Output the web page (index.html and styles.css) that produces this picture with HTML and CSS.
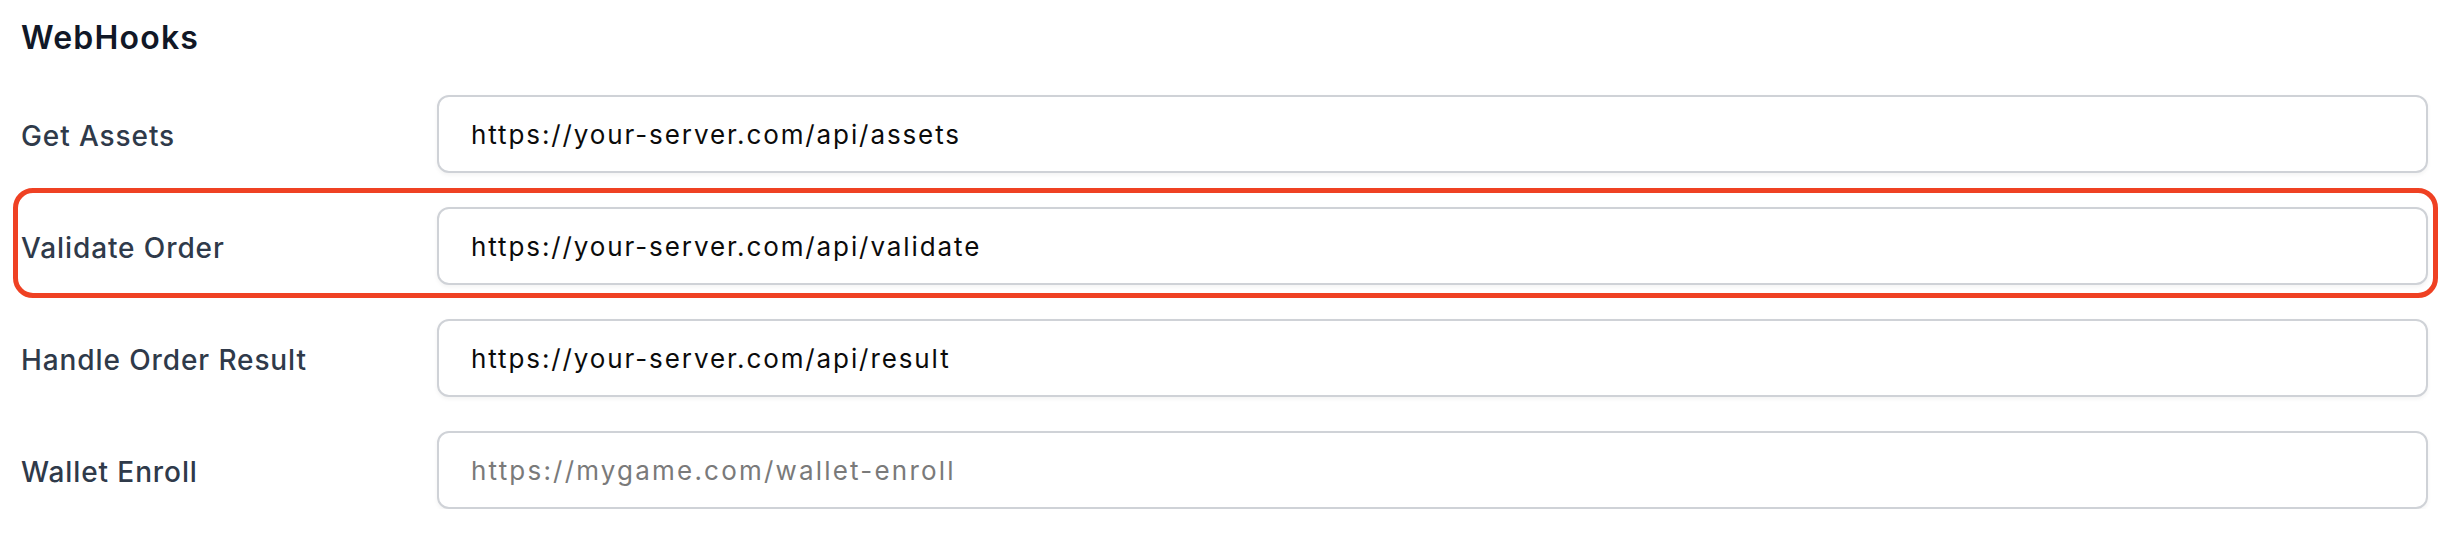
FILE: index.html
```html
<!DOCTYPE html>
<html lang="en">
<head>
<meta charset="utf-8">
<title>WebHooks</title>
<link rel="stylesheet" href="styles.css">
</head>
<body>
<section class="webhooks">
  <h2 class="title">WebHooks</h2>
  <div class="rows">
    <div class="row">
      <label class="label" for="get-assets">Get Assets</label>
      <input class="field" id="get-assets" type="text" value="https://your-server.com/api/assets">
    </div>
    <div class="row row-highlight">
      <label class="label" for="validate-order">Validate Order</label>
      <input class="field" id="validate-order" type="text" value="https://your-server.com/api/validate">
    </div>
    <div class="row">
      <label class="label" for="order-result">Handle Order Result</label>
      <input class="field" id="order-result" type="text" value="https://your-server.com/api/result">
    </div>
    <div class="row">
      <label class="label" for="wallet-enroll">Wallet Enroll</label>
      <input class="field" id="wallet-enroll" type="text" placeholder="https://mygame.com/wallet-enroll">
    </div>
  </div>
</section>
</body>
</html>
```

FILE: styles.css
```css
* { box-sizing: border-box; }

html, body {
  margin: 0;
  padding: 0;
  background: #ffffff;
}

body {
  font-family: Inter, "Noto Sans", "Liberation Sans", sans-serif;
}

.webhooks {
  padding: 18px 22px 0 21px;
}

.title {
  margin: 0;
  font-size: 32px;
  line-height: 40px;
  font-weight: 600;
  letter-spacing: 1.2px;
  color: #111827;
}

.rows {
  margin-top: 37px;
  display: flex;
  flex-direction: column;
  gap: 34px;
}

.row {
  position: relative;
  display: grid;
  grid-template-columns: 416px 1fr;
  align-items: center;
}

.label {
  margin-top: 4px;
  font-size: 28px;
  line-height: 34px;
  font-weight: 500;
  letter-spacing: 0.9px;
  color: #2f3a4a;
}

.field {
  height: 78px;
  width: 100%;
  padding: 0 32px;
  border: 2px solid #cfd2d7;
  border-radius: 12px;
  background: #ffffff;
  box-shadow: 0 2px 4px rgba(0, 0, 0, 0.05);
  font-family: Inter, "Noto Sans", "Liberation Sans", sans-serif;
  font-size: 26px;
  letter-spacing: 1.9px;
  color: #0b0b0b;
  outline: none;
}

.field::placeholder {
  color: #7a7a7a;
  letter-spacing: 2.2px;
  opacity: 1;
}

.row-highlight::before {
  content: "";
  position: absolute;
  top: -19px;
  bottom: -13px;
  left: -8px;
  right: -10px;
  border: 5px solid #ef4123;
  border-radius: 20px;
  pointer-events: none;
}
```
